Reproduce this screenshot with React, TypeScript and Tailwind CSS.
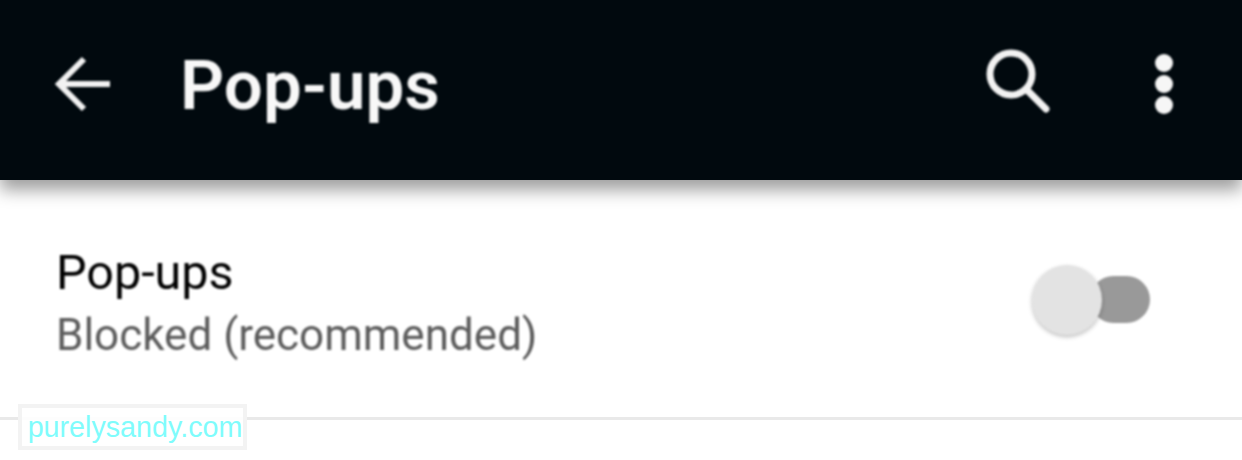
export default function App() {
    return (
        <div className="relative w-[1242px] h-[460px] overflow-hidden bg-white font-['Roboto',sans-serif]">
            <header className="relative z-10 h-[180px] bg-[#01090e] flex items-center pl-[54px] pr-[68px] shadow-[0_10px_16px_rgba(0,0,0,0.38)]">
                <svg width="58" height="58" viewBox="0 0 58 58" fill="none" stroke="#f2f2f2" strokeWidth="6" className="blur-[1px] mt-[-13px]">
                    <path d="M56 29H5M30 4L5 29l25 25" />
                </svg>
                <h1 className="ml-[68px] mt-[-10px] text-[69px] leading-none font-semibold text-[#f8f8f8] blur-[1px]">
                    Pop-ups
                </h1>
                <div className="ml-auto flex items-center gap-[102px] mt-[-14px]">
                    <svg width="66" height="66" viewBox="0 0 66 66" fill="none" stroke="#f2f2f2" strokeWidth="7" strokeLinecap="round" className="blur-[1px] mt-[-2px]">
                        <circle cx="25" cy="25" r="21" />
                        <path d="M41 41l19 19" />
                    </svg>
                    <svg width="20" height="62" viewBox="0 0 20 62" fill="#f6f6f6" className="blur-[1px] mt-[1px]">
                        <circle cx="10" cy="10" r="9" />
                        <circle cx="10" cy="31" r="9" />
                        <circle cx="10" cy="52" r="9" />
                    </svg>
                </div>
            </header>

            <div className="h-[240px] flex items-center pl-[56px] pr-[92px] border-b-[3px] border-[#e9e9e9]">
                <div className="flex flex-col blur-[1px] mt-[12px]">
                    <span className="text-[48.5px] leading-[62px] text-[#000000]">Pop-ups</span>
                    <span className="text-[44px] leading-[63px] text-[#5c5c5c]">Blocked (recommended)</span>
                </div>
                <div className="ml-auto flex items-center blur-[1px] mt-[2px]">
                    <div className="relative z-10 w-[70px] h-[70px] rounded-full bg-[#e3e3e3] shadow-[0_2px_4px_rgba(0,0,0,0.25)]" />
                    <div className="w-[60px] h-[47px] -ml-[12px] rounded-full bg-[#999999]" />
                </div>
            </div>

            <div className="absolute left-[18px] top-[404px] w-[229px] h-[46px] pl-[5px] flex items-center justify-center border-[4px] border-[#f3f3f3] bg-white/90 font-['Liberation_Sans',sans-serif] text-[28.7px] leading-none text-[#7ffcfc]">
                purelysandy.com
            </div>
        </div>
    );
}
